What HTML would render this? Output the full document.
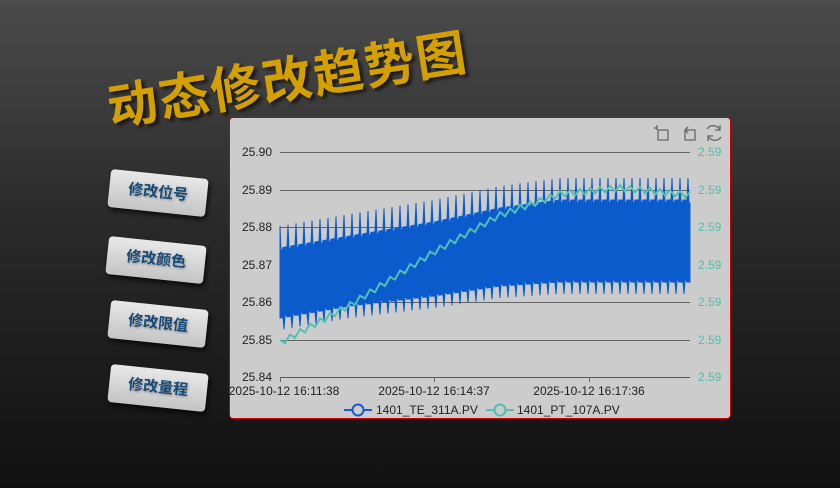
<!DOCTYPE html>
<html><head><meta charset="utf-8"><style>
body{margin:0;width:840px;height:488px;overflow:hidden;background:linear-gradient(#4b4b4b,#2a2a2a 45%,#111);font-family:"Liberation Sans","Noto Sans CJK SC",sans-serif;position:relative}
.title{position:absolute;left:108px;top:84px;font-size:50px;font-weight:bold;color:#d4a000;transform:rotate(-9deg);transform-origin:left center;letter-spacing:2px;text-shadow:3px 3px 3px rgba(0,0,0,.6);white-space:nowrap;line-height:50px}
.btn{position:absolute;width:98px;height:38px;border-radius:4px;background:linear-gradient(#e8e8e8,#c4c4c4);box-shadow:2px 3px 5px rgba(0,0,0,.7);color:#154a7a;font-weight:bold;font-size:15px;line-height:38px;text-align:center;transform:rotate(6deg);text-shadow:1px 1px 2px rgba(0,0,0,.35)}
.panel{position:absolute;left:229px;top:117px;width:500px;height:300px;background:#cccccc;border:1px solid #c00;border-radius:4px}
</style></head><body>
<div class="title">动态修改趋势图</div>
<div class="btn" style="left:109px;top:174px">修改位号</div>
<div class="btn" style="left:107px;top:241px">修改颜色</div>
<div class="btn" style="left:109px;top:305px">修改限值</div>
<div class="btn" style="left:109px;top:369px">修改量程</div>
<div class="panel"></div>
<svg width="840" height="488" style="position:absolute;left:0;top:0" font-family="Liberation Sans, sans-serif">
<g stroke="#666" stroke-width="1">
<line x1="280" x2="690" y1="152.5" y2="152.5"/><line x1="280" x2="690" y1="190.5" y2="190.5"/><line x1="280" x2="690" y1="227.5" y2="227.5"/><line x1="280" x2="690" y1="265.5" y2="265.5"/><line x1="280" x2="690" y1="302.5" y2="302.5"/><line x1="280" x2="690" y1="340.5" y2="340.5"/><line x1="280" x2="690" y1="377.5" y2="377.5" stroke="#555"/>
<line x1="280.5" x2="280.5" y1="377" y2="382"/><line x1="434.5" x2="434.5" y1="377" y2="382"/><line x1="589.5" x2="589.5" y1="377" y2="382"/>
</g>
<g font-size="12" fill="#222" text-anchor="end">
<text x="272" y="156">25.90</text><text x="272" y="194">25.89</text><text x="272" y="231">25.88</text><text x="272" y="269">25.87</text><text x="272" y="306">25.86</text><text x="272" y="344">25.85</text><text x="272" y="381">25.84</text>
</g>
<g font-size="12" fill="#4fbfb0">
<text x="698" y="156">2.59</text><text x="698" y="194">2.59</text><text x="698" y="231">2.59</text><text x="698" y="269">2.59</text><text x="698" y="306">2.59</text><text x="698" y="344">2.59</text><text x="698" y="381">2.59</text>
</g>
<g font-size="12" fill="#222" text-anchor="middle">
<text x="284" y="395">2025-10-12 16:11:38</text><text x="434" y="395">2025-10-12 16:14:37</text><text x="589" y="395">2025-10-12 16:17:36</text>
</g>
<path id="band" fill="#0b5bcc" stroke="#0b5bcc" stroke-width="1"/>
<path id="teal" fill="none" stroke="#52c0b3" stroke-width="2"/>
<g font-size="12" fill="#222">
<line x1="344" x2="372" y1="410" y2="410" stroke="#1a5ccc" stroke-width="2"/><circle cx="358" cy="410" r="5.5" fill="#ccc" stroke="#1a5ccc" stroke-width="2"/>
<text x="376" y="414">1401_TE_311A.PV</text>
<line x1="486" x2="514" y1="410" y2="410" stroke="#52c0b3" stroke-width="2"/><circle cx="500" cy="410" r="5.5" fill="#ccc" stroke="#52c0b3" stroke-width="2"/>
<text x="517" y="414">1401_PT_107A.PV</text>
</g>
<g fill="none" stroke="#666" stroke-width="1.3">
<path d="M657 125v5M654 128h3M658 130h10v10h-10z"/>
<path d="M685 130h10v10h-10v-10M685 130l3-3M685 130l3 3"/>
<path d="M720 130a7.5 7.5 0 0 0-13-1M708 136a7.5 7.5 0 0 0 13 1"/><path d="M720 125v5h-5M708 141v-5h5"/>
</g>
</svg>
<script>
function lerp(pts,x){for(var i=0;i<pts.length-1;i++){if(x<=pts[i+1][0]){var t=(x-pts[i][0])/(pts[i+1][0]-pts[i][0]);return pts[i][1]+(pts[i+1][1]-pts[i][1])*t;}}return pts[pts.length-1][1];}
var U=[[280,248],[350,236],[434,222],[500,208],[560,200],[690,200]];
var L=[[280,318],[350,306],[434,296],[500,286],[560,282],[690,282]];
var T=[[280,343],[350,305],[434,252],[500,215],[560,194],[620,188],[690,195]];
var up=[],lo=[],tl=[];
for(var x=280;x<=690;x+=1){
 var ph=(x-280)%8;
 var u=lerp(U,x),l=lerp(L,x);
 if(ph==0)u-=22;else if(ph<3)u+=3;
 if(ph==4)l+=12;else if(ph>4&&ph<7)l-=2;
 up.push(x+","+u.toFixed(1));lo.unshift(x+","+l.toFixed(1));
 var p2=(x-280)%10;
 var tv=lerp(T,x)+(p2<5?p2*1.2:(10-p2)*1.2)-3;
 tl.push(x+","+tv.toFixed(1));
}
document.getElementById('band').setAttribute('d','M'+up.join('L')+'L'+lo.join('L')+'Z');
document.getElementById('teal').setAttribute('d','M'+tl.join('L'));
</script>
</body></html>
